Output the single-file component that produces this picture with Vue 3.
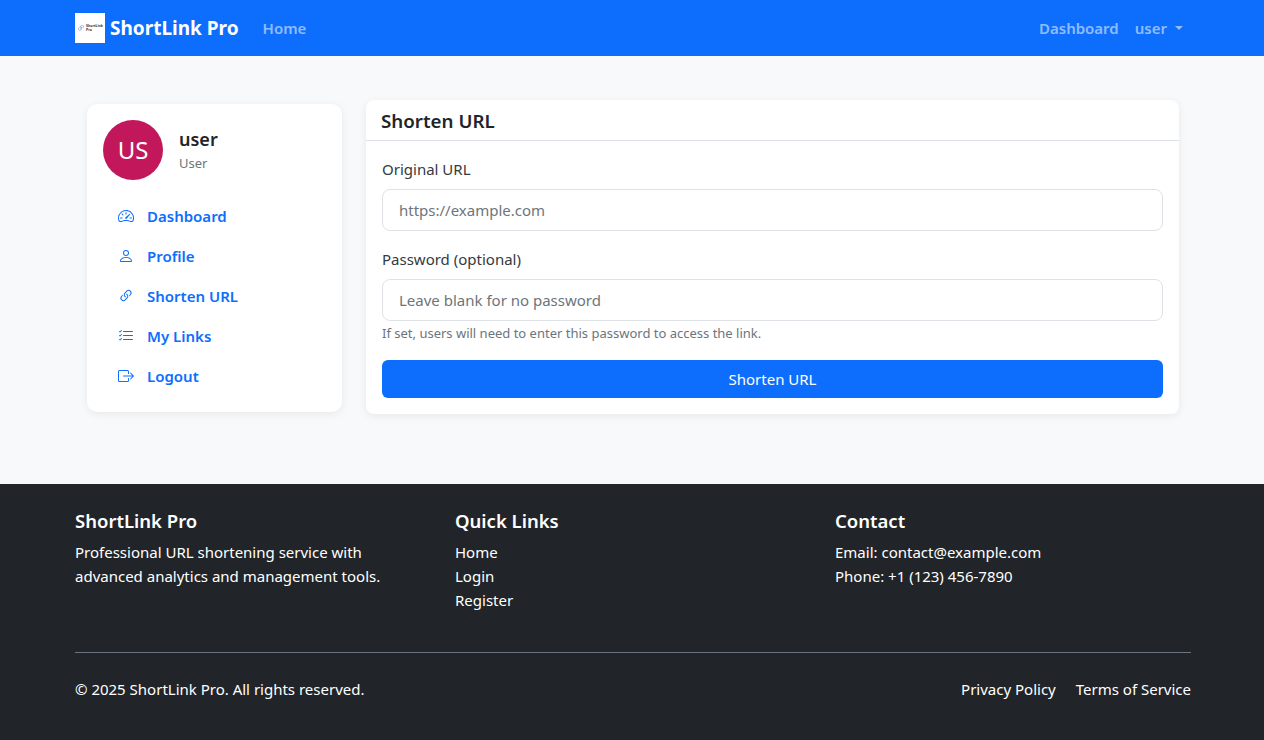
<script setup>
const navItems = [
  { label: 'Dashboard', icon: 'speed' },
  { label: 'Profile', icon: 'person' },
  { label: 'Shorten URL', icon: 'link' },
  { label: 'My Links', icon: 'list' },
  { label: 'Logout', icon: 'logout' }
]
</script>

<template>
  <div class="page">
    <header class="navbar">
      <div class="bar-inner">
        <a class="brand">
          <span class="logo">
            <svg class="logo-link" viewBox="0 0 16 16" fill="#5b8ac4"><path d="M4.715 6.542 3.343 7.914a3 3 0 1 0 4.243 4.243l1.828-1.829A3 3 0 0 0 8.586 5.5L8 6.086a1.002 1.002 0 0 0-.154.199 2 2 0 0 1 .861 3.337L6.88 11.45a2 2 0 1 1-2.83-2.83l.793-.792a4.018 4.018 0 0 1-.128-1.287z"/><path d="M6.586 4.672A3 3 0 0 0 7.414 9.5l.775-.776a2 2 0 0 1-.896-3.346L9.12 3.55a2 2 0 1 1 2.83 2.83l-.793.792c.112.42.155.855.128 1.287l1.372-1.372a3 3 0 1 0-4.243-4.243L6.586 4.672z"/></svg>
            <span class="logo-text">ShortLink<br>Pro</span>
          </span>
          <span>ShortLink Pro</span>
        </a>
        <a class="top-link home">Home</a>
        <span class="spacer"></span>
        <a class="top-link">Dashboard</a>
        <a class="top-link user">user<span class="caret"></span></a>
      </div>
    </header>

    <main class="main">
      <div class="layout">
        <aside class="side-card">
          <div class="user-head">
            <div class="avatar">US</div>
            <div class="user-meta">
              <div class="user-name">user</div>
              <div class="user-role">User</div>
            </div>
          </div>
          <nav class="side-nav">
            <a v-for="item in navItems" :key="item.label" class="side-link">
              <svg class="icon" viewBox="0 0 16 16" fill="currentColor">
                <template v-if="item.icon === 'speed'">
                  <path d="M8 4a.5.5 0 0 1 .5.5V6a.5.5 0 0 1-1 0V4.5A.5.5 0 0 1 8 4zM3.732 5.732a.5.5 0 0 1 .707 0l.915.914a.5.5 0 1 1-.708.708l-.914-.915a.5.5 0 0 1 0-.707zM2 10a.5.5 0 0 1 .5-.5h1.586a.5.5 0 0 1 0 1H2.5A.5.5 0 0 1 2 10zm9.5 0a.5.5 0 0 1 .5-.5h1.5a.5.5 0 0 1 0 1H12a.5.5 0 0 1-.5-.5zm.754-4.246a.389.389 0 0 0-.527-.02L7.547 9.31a.91.91 0 1 0 1.302 1.258l3.434-4.297a.389.389 0 0 0-.029-.518z"/>
                  <path fill-rule="evenodd" d="M0 10a8 8 0 1 1 15.547 2.661c-.442 1.253-1.845 1.602-2.932 1.25C11.309 13.488 9.475 13 8 13c-1.474 0-3.31.488-4.615.911-1.087.352-2.49.003-2.932-1.25A7.988 7.988 0 0 1 0 10zm8-7a7 7 0 0 0-6.603 9.329c.203.575.923.876 1.68.63C4.397 12.533 6.358 12 8 12s3.604.532 4.923.96c.757.245 1.477-.056 1.68-.631A7 7 0 0 0 8 3z"/>
                </template>
                <path v-else-if="item.icon === 'person'" d="M8 8a3 3 0 1 0 0-6 3 3 0 0 0 0 6Zm2-3a2 2 0 1 1-4 0 2 2 0 0 1 4 0Zm4 8c0 1-1 1-1 1H3s-1 0-1-1 1-4 6-4 6 3 6 4Zm-1-.004c-.001-.246-.154-.986-.832-1.664C11.516 10.68 10.289 10 8 10c-2.29 0-3.516.68-4.168 1.332-.678.678-.83 1.418-.832 1.664h10Z"/>
                <template v-else-if="item.icon === 'link'">
                  <path d="M4.715 6.542 3.343 7.914a3 3 0 1 0 4.243 4.243l1.828-1.829A3 3 0 0 0 8.586 5.5L8 6.086a1.002 1.002 0 0 0-.154.199 2 2 0 0 1 .861 3.337L6.88 11.45a2 2 0 1 1-2.83-2.83l.793-.792a4.018 4.018 0 0 1-.128-1.287z"/>
                  <path d="M6.586 4.672A3 3 0 0 0 7.414 9.5l.775-.776a2 2 0 0 1-.896-3.346L9.12 3.55a2 2 0 1 1 2.83 2.83l-.793.792c.112.42.155.855.128 1.287l1.372-1.372a3 3 0 1 0-4.243-4.243L6.586 4.672z"/>
                </template>
                <path v-else-if="item.icon === 'list'" fill-rule="evenodd" d="M5 11.5a.5.5 0 0 1 .5-.5h9a.5.5 0 0 1 0 1h-9a.5.5 0 0 1-.5-.5zm0-4a.5.5 0 0 1 .5-.5h9a.5.5 0 0 1 0 1h-9a.5.5 0 0 1-.5-.5zm0-4a.5.5 0 0 1 .5-.5h9a.5.5 0 0 1 0 1h-9a.5.5 0 0 1-.5-.5zM3.854 2.146a.5.5 0 0 1 0 .708l-1.5 1.5a.5.5 0 0 1-.708 0l-.5-.5a.5.5 0 1 1 .708-.708L2 3.293l1.146-1.147a.5.5 0 0 1 .708 0zm0 4a.5.5 0 0 1 0 .708l-1.5 1.5a.5.5 0 0 1-.708 0l-.5-.5a.5.5 0 1 1 .708-.708L2 7.293l1.146-1.147a.5.5 0 0 1 .708 0zm0 4a.5.5 0 0 1 0 .708l-1.5 1.5a.5.5 0 0 1-.708 0l-.5-.5a.5.5 0 0 1 .708-.708l.146.147 1.146-1.147a.5.5 0 0 1 .708 0z"/>
                <template v-else>
                  <path fill-rule="evenodd" d="M10 12.5a.5.5 0 0 1-.5.5h-8a.5.5 0 0 1-.5-.5v-9a.5.5 0 0 1 .5-.5h8a.5.5 0 0 1 .5.5v2a.5.5 0 0 0 1 0v-2A1.5 1.5 0 0 0 9.5 2h-8A1.5 1.5 0 0 0 0 3.5v9A1.5 1.5 0 0 0 1.5 14h8a1.5 1.5 0 0 0 1.5-1.5v-2a.5.5 0 0 0-1 0v2z"/>
                  <path fill-rule="evenodd" d="M15.854 8.354a.5.5 0 0 0 0-.708l-3-3a.5.5 0 0 0-.708.708L14.293 7.5H5.5a.5.5 0 0 0 0 1h8.793l-2.147 2.146a.5.5 0 0 0 .708.708l3-3z"/>
                </template>
              </svg>
              <span>{{ item.label }}</span>
            </a>
          </nav>
        </aside>

        <section class="form-card">
          <h2 class="card-title">Shorten URL</h2>
          <form class="card-body" @submit.prevent>
            <label class="label">Original URL</label>
            <input class="input first" type="text" placeholder="https://example.com">
            <label class="label">Password (optional)</label>
            <input class="input" type="text" placeholder="Leave blank for no password">
            <div class="hint">If set, users will need to enter this password to access the link.</div>
            <button class="submit" type="submit">Shorten URL</button>
          </form>
        </section>
      </div>
    </main>

    <footer class="footer">
      <div class="foot-inner">
        <div class="foot-cols">
          <div>
            <h3 class="foot-title">ShortLink Pro</h3>
            <p class="foot-line">Professional URL shortening service with<br>advanced analytics and management tools.</p>
          </div>
          <div>
            <h3 class="foot-title">Quick Links</h3>
            <p class="foot-line">Home</p>
            <p class="foot-line">Login</p>
            <p class="foot-line">Register</p>
          </div>
          <div>
            <h3 class="foot-title">Contact</h3>
            <p class="foot-line">Email: contact@example.com</p>
            <p class="foot-line">Phone: +1 (123) 456-7890</p>
          </div>
        </div>
        <div class="foot-bottom">
          <span>© 2025 ShortLink Pro. All rights reserved.</span>
          <span class="foot-legal"><a>Privacy Policy</a><a>Terms of Service</a></span>
        </div>
      </div>
    </footer>
  </div>
</template>

<style>
html, body { margin: 0; background: #f8f9fa; }
</style>

<style scoped>
.page {
  font-family: "Noto Sans", "Open Sans", sans-serif;
  font-size: 15px;
  line-height: 24px;
  color: #212529;
  min-height: 740px;
  display: flex;
  flex-direction: column;
}
.navbar { background: #0d6efd; height: 56px; }
.bar-inner {
  width: 1116px;
  height: 56px;
  margin-left: 75px;
  display: flex;
  align-items: center;
}
.brand {
  display: flex;
  align-items: center;
  gap: 5px;
  color: #fff;
  font-size: 19px;
  font-weight: 700;
  margin-right: 16px;
}
.logo {
  width: 30px;
  height: 30px;
  background: #fff;
  display: flex;
  align-items: center;
  justify-content: center;
  gap: 1px;
  flex: none;
}
.logo-link { width: 8px; height: 8px; }
.logo-text {
  font-size: 3.5px;
  line-height: 4px;
  color: #333;
  font-weight: 700;
}
.top-link {
  color: rgba(255, 255, 255, 0.55);
  font-weight: 600;
  padding: 0 8px;
  display: flex;
  align-items: center;
}
.spacer { flex: 1; }
.caret {
  width: 0;
  height: 0;
  margin-left: 8px;
  border-top: 4.8px solid rgba(255, 255, 255, 0.55);
  border-left: 4.8px solid transparent;
  border-right: 4.8px solid transparent;
}
.main { height: 428px; box-sizing: border-box; padding-top: 44px; }
.layout {
  width: 1116px;
  margin-left: 75px;
  padding: 0 12px;
  box-sizing: border-box;
  display: grid;
  grid-template-columns: 255px 813px;
  column-gap: 24px;
  align-items: start;
}
.side-card {
  margin-top: 4px;
  background: #fff;
  border-radius: 10px;
  padding: 16px;
  box-shadow: 0 2px 8px rgba(0, 0, 0, 0.07);
}
.user-head { display: flex; align-items: center; gap: 16px; margin-bottom: 16px; }
.avatar {
  width: 60px;
  height: 60px;
  border-radius: 50%;
  background: #c2185b;
  color: #fff;
  font-size: 24px;
  display: flex;
  align-items: center;
  justify-content: center;
}
.user-name { font-size: 18px; font-weight: 600; line-height: 24px; }
.user-role { font-size: 13px; line-height: 20px; color: #6c757d; margin-top: 2px; }
.side-nav { display: flex; flex-direction: column; }
.side-link {
  height: 40px;
  padding-left: 15px;
  display: flex;
  align-items: center;
  gap: 13px;
  color: #0d6efd;
  font-weight: 600;
}
.icon { width: 16px; height: 16px; flex: none; }
.form-card {
  background: #fff;
  border-radius: 8px;
  box-shadow: 0 2px 8px rgba(0, 0, 0, 0.07);
  height: 314px;
}
.card-title {
  margin: 0;
  height: 41px;
  box-sizing: border-box;
  padding: 9px 16px 0 15px;
  font-size: 18.75px;
  line-height: 24px;
  font-weight: 600;
  border-bottom: 1px solid #dee2e6;
}
.card-body { padding: 16px; display: flex; flex-direction: column; }
.label { margin-bottom: 8px; color: #343a40; }
.input {
  height: 42px;
  box-sizing: border-box;
  border: 1px solid #dee2e6;
  border-radius: 8px;
  padding: 0 16px;
  font: inherit;
  color: #212529;
  background: #fff;
  outline: none;
}
.input::placeholder { color: #6c757d; opacity: 1; }
.input.first { margin-bottom: 16px; }
.hint { font-size: 13px; line-height: 20px; color: #6c757d; margin-top: 2px; margin-bottom: 17px; }
.submit {
  height: 38px;
  border: 0;
  border-radius: 6px;
  background: #0d6efd;
  color: #fff;
  font: inherit;
}
.footer { background: #212529; color: #fff; flex: 1; }
.foot-inner { width: 1116px; margin-left: 75px; padding-top: 25px; }
.foot-cols { display: grid; grid-template-columns: repeat(3, 380px); height: 143px; box-sizing: border-box; }
.foot-title { margin: 0 0 7px; font-size: 18.5px; line-height: 24px; font-weight: 600; }
.foot-line { margin: 0; }
.foot-bottom {
  border-top: 1px solid #6c757d;
  display: flex;
  justify-content: space-between;
  padding-top: 24px;
}
.foot-legal { display: flex; gap: 20px; }
</style>
